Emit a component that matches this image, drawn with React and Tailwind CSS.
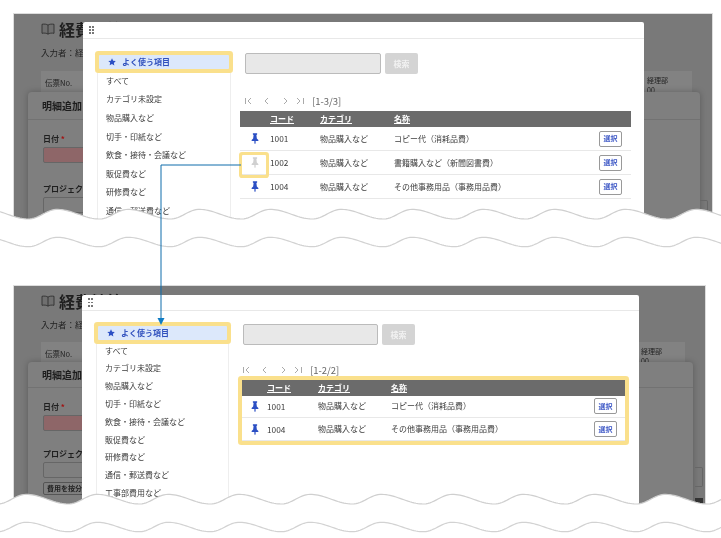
import React from "react";

const categories = ["すべて","カテゴリ未設定","物品購入など","切手・印紙など","飲食・接待・会議など","販促費など","研修費など","通信・郵送費など","工事部費用など"];

function wavePath(baseY, amp, crestX, bottom) {
  const period = 71;
  let d = "";
  for (let x = -4; x <= 725; x += 2) {
    const t = (((x - crestX) / period) % 1 + 1) % 1;
    const angle = t < 0.6 ? (t / 0.6) * Math.PI : Math.PI + ((t - 0.6) / 0.4) * Math.PI;
    const y = baseY - amp * Math.cos(angle);
    d += (d ? "L" : "M") + x + " " + y.toFixed(2);
  }
  return bottom ? d + `L725 ${bottom}L-4 ${bottom}Z` : d;
}

const Pin = ({ off }) => (
  <svg viewBox="0 0 12 18" className={off ? "w-[8px] h-[11px] text-[#d0d0d0]" : "w-[8px] h-[11px] text-[#2b4fc4]"} fill="currentColor">
    <path d="M2.5 0.5h7v2l-1.2 0.7 0.7 6 2.5 2.3v1.5H7v3.5l-1 2-1-2v-3.5H.5v-1.5L3 9.2l.7-6-1.2-.7z" />
  </svg>
);

const Star = () => (
  <svg viewBox="0 0 24 24" className="w-[8px] h-[8px] text-[#2b4fc4]" fill="currentColor">
    <path d="M12 1l3.4 7.3 7.9 1-5.8 5.4 1.5 7.9L12 17.8l-7 3.8 1.5-7.9L.7 9.3l7.9-1z" />
  </svg>
);

const Book = () => (
  <svg viewBox="0 0 16 14" className="w-[14px] h-[12px] text-[#2c2c2c]" fill="#6f6f6f" stroke="currentColor" strokeWidth="1">
    <path d="M8 2.5C6.5 1.3 3.5 1 1 1.500v10.500c2.500-.5 5.500-.2 7 1 1.500-1.200 4.500-1.500 7-1V1.500C12.500 1 9.500 1.300 8 2.500zM8 2.500V13" />
  </svg>
);

const Grip = () => (
  <div className="grid grid-cols-2 gap-x-[1.5px] gap-y-[1.5px] w-[5px]">
    {[0,1,2,3,4,5].map((i) => <span key={i} className="w-[1.7px] h-[1.7px] bg-[#777]" />)}
  </div>
);

const PagerIcons = () => (
  <svg viewBox="0 0 62 8" className="w-[62px] h-[8px] text-[#aaa]" fill="none" stroke="currentColor" strokeWidth="1">
    <path d="M.5 1v6M6 1L3 4l3 3M23 1l-3 3 3 3M39 1l3 3-3 3M52 1l3 3-3 3M58.500 1v6" />
  </svg>
);

function Backdrop({ band, dialog, head, label2, rightBox, rightInput, extended }) {
  return (
    <>
      <div className="pl-[27px] pr-[20px] pt-[8px]">
        <div className="flex items-center gap-[4px] h-[14px]">
          <Book />
          <span className="text-[16px] font-bold leading-none text-[#1f1f1f]">経費精算</span>
        </div>
        <p className="mt-[9px] h-[14px] text-[8.500px] leading-[14px] text-[#222]">入力者：経理部</p>
        <div className={`${band} flex justify-between h-[30px] bg-[#828282] text-[7.500px] text-[#222]`}>
          <span className="pl-[4px] pt-[6px]">伝票No.</span>
          <div className={`${rightBox} leading-[10px] pt-[4px] text-[7px]`}>経理部<br />00</div>
        </div>
      </div>
      <div className={`${dialog} absolute left-[14px] right-[12px] bottom-0 bg-[#7f7f7f] shadow-[0_0_6px_rgba(0,0,0,0.25)] rounded-t-sm`}>
        <div className={`${head} flex items-center pl-[14px] border-b border-[#727272] text-[10px] font-bold text-[#1c1c1c]`}>明細追加</div>
        <div className="px-[15px] pt-[13px] text-[8px] font-bold text-[#1f1f1f]">
          <div className="h-[11px] leading-[11px]">日付<span className="text-[#a11313]"> *</span></div>
          <div className="mt-[3px] h-[16px] w-[60px] bg-[#8e6668] border border-[#666] rounded-[2px]" />
          <div className={`${label2} h-[11px] leading-[11px] whitespace-nowrap`}>プロジェクト</div>
          <div className="mt-[3px] h-[16px] w-[60px] border border-[#666] rounded-[2px]" />
          {extended && <div className="mt-[4px] h-[13px] w-[50px] border border-[#555] rounded-[2px] text-[7px] leading-[11px] pl-[3px] whitespace-nowrap overflow-hidden">費用を按分</div>}
        </div>
      </div>
      <div className={`${rightInput} absolute w-[8px] h-[20px] border border-l-0 border-[#666] rounded-r-[2px]`} />
      {extended && <div className="absolute left-[681px] top-[212px] w-[8px] h-[8px] bg-[#333]" />}
    </>
  );
}

function Row({ cols, row, code, name, mark, off }) {
  return (
    <div className={`${cols} ${row} grid items-center border-b border-[#e8e8e8] text-[8px] text-[#3c3c3c]`}>
      <div className="relative flex justify-center h-full items-center">
        {mark && <span className="absolute left-[1.500px] top-[3.500px] w-[24px] h-[20px] ring-[3px] ring-[#fae08c] rounded-[1px]" />}
        <Pin off={off} />
      </div>
      <span className="text-[8.300px]">{code}</span>
      <span>物品購入など</span>
      <span>{name}</span>
      <button className="w-[23px] h-[16px] border border-[#999] rounded-[2px] text-[7px] font-bold text-[#3a55c5] bg-white">選択</button>
    </div>
  );
}

function Dialog({ pos, rowH, listW, pt, inputW, gapBefore, pager, tableCls, wrap, cols, rowCls, rows, label, headH, bodyGap, items }) {
  return (
    <div className={`${pos} absolute bottom-0 bg-white rounded-t-[2px]`}>
      <div className={`${headH} flex items-center pl-[6px] border-b border-[#e8e8e8]`}><Grip /></div>
      <div className={`${pt} flex pl-[14px]`}>
        <div className={`${listW} shrink-0 h-[230px] border-x border-[#eee]`}>
          <div className={`${rowH} flex items-center px-px`}>
            <div className="flex items-center w-full h-[14px] pl-[9px] gap-[6px] bg-[#dce8fb] ring-[4px] ring-[#fae08c] rounded-[1px] text-[8px] font-bold text-[#2f4fbd]">
              <Star />よく使う項目
            </div>
          </div>
          {categories.slice(0, items).map((c) => (
            <div key={c} className={`${rowH} flex items-center pl-[8px] text-[8px] text-[#3c3c3c] whitespace-nowrap`}>{c}</div>
          ))}
        </div>
        <div className={bodyGap}>
          <div className="flex gap-[4px] pl-[5px]">
            <div className={`${inputW} h-[21px] bg-[#e8e8e8] border border-[#bbb] rounded-[2px]`} />
            <button className="w-[33px] h-[21px] bg-[#d4d4d4] rounded-[2px] text-[8px] font-bold text-[#f2f2f2]">検索</button>
          </div>
          <div className={`${gapBefore} ${pager} flex items-center gap-[5px] h-[12px] text-[9.500px] text-[#666]`}>
            <PagerIcons />
            <span>{label}</span>
          </div>
          <div className={wrap}>
            <div className={`${cols} ${tableCls} grid items-center bg-[#6b6b6b] text-[8px] font-bold text-white`}>
              <span />
              <span className="underline">コード</span>
              <span className="underline">カテゴリ</span>
              <span className="underline">名称</span>
              <span className="w-[23px]" />
            </div>
            {rows.map((r) => (
              <Row key={r.code} {...r} cols={cols} row={rowCls} />
            ))}
          </div>
        </div>
      </div>
    </div>
  );
}

export default function App() {
  return (
    <div className="relative w-[721px] h-[538px] bg-white overflow-hidden font-['Noto_Sans_CJK_JP','Noto_Sans',sans-serif]">
      <div className="blur-[0.4px]">
        <section className="relative ml-[13px] mt-[13px] w-[700px] h-[212px] bg-[#797979] border border-[#ddd] border-b-0 overflow-hidden">
          <Backdrop band="mt-[12px]" dialog="top-[78px]" head="h-[28px]" label2="mt-[20px]" rightBox="w-[45px]" rightInput="left-[686px] top-[186px]" />
          <Dialog
            pos="left-[69px] w-[561px] top-[8px]"
            headH="h-[17px]"
            pt="pt-[14px]"
            listW="w-[134px]"
            rowH="h-[18.600px]"
            items={8}
            inputW="w-[136px]"
            gapBefore="mt-[21px]"
            pager="pl-[5px]"
            bodyGap="ml-[9px] w-[391px]"
            label="[1-3/3]"
            wrap="mt-[4px]"
            tableCls="h-[16px]"
            cols="grid-cols-[30px_50px_74px_205px_32px]"
            rowCls="h-[24px]"
            rows={[
              { code: "1001", name: "コピー代（消耗品費）" },
              { code: "1002", name: "書籍購入など（新聞図書費）", off: true, mark: true },
              { code: "1004", name: "その他事務用品（事務用品費）" },
            ]}
          />
        </section>
        <section className="relative ml-[13px] mt-[60px] w-[693px] h-[225px] bg-[#797979] border border-[#ddd] border-b-0 overflow-hidden">
          <Backdrop extended band="mt-[11px]" dialog="top-[76px]" head="h-[26px]" label2="mt-[17px]" rightBox="w-[44px]" rightInput="left-[681px] top-[181px]" />
          <Dialog
            pos="left-[68px] w-[557px] top-[9px]"
            headH="h-[16px]"
            pt="pt-[13px]"
            listW="w-[133px]"
            rowH="h-[17.800px]"
            items={9}
            inputW="w-[135px]"
            gapBefore="mt-[19px]"
            pager="pl-[5px]"
            bodyGap="ml-[9px] w-[387px]"
            label="[1-2/2]"
            wrap="mt-[4px] w-[383px] ml-[4px] ring-[4px] ring-[#fae08c] rounded-[1px]"
            tableCls="h-[15.500px]"
            cols="grid-cols-[25px_51px_73px_203px_31px]"
            rowCls="h-[22.700px]"
            rows={[
              { code: "1001", name: "コピー代（消耗品費）" },
              { code: "1004", name: "その他事務用品（事務用品費）" },
            ]}
          />
        </section>
      </div>
      <svg viewBox="0 0 721 538" className="absolute left-0 top-0 w-[721px] h-[538px] pointer-events-none">
        <path d={wavePath(214.2, 4.8, 57, 284)} fill="white" stroke="none" />
        <path d={wavePath(214.2, 4.8, 57)} fill="none" stroke="#cfcfcf" strokeWidth="1.200" />
        <path d={wavePath(242, 4.7, 57)} fill="none" stroke="#d2d2d2" strokeWidth="1.200" />
        <path d="M241 165H161V320" fill="none" stroke="#0f6cab" strokeWidth="1" />
        <path d="M157.500 318H164.500L161 325Z" fill="#0f7cc4" />
        <path d={wavePath(499.2, 4.8, 26, 540)} fill="white" stroke="none" />
        <path d={wavePath(499.2, 4.8, 26)} fill="none" stroke="#cfcfcf" strokeWidth="1.200" />
        <path d={wavePath(527, 4.7, 26)} fill="none" stroke="#d2d2d2" strokeWidth="1.200" />
      </svg>
    </div>
  );
}
